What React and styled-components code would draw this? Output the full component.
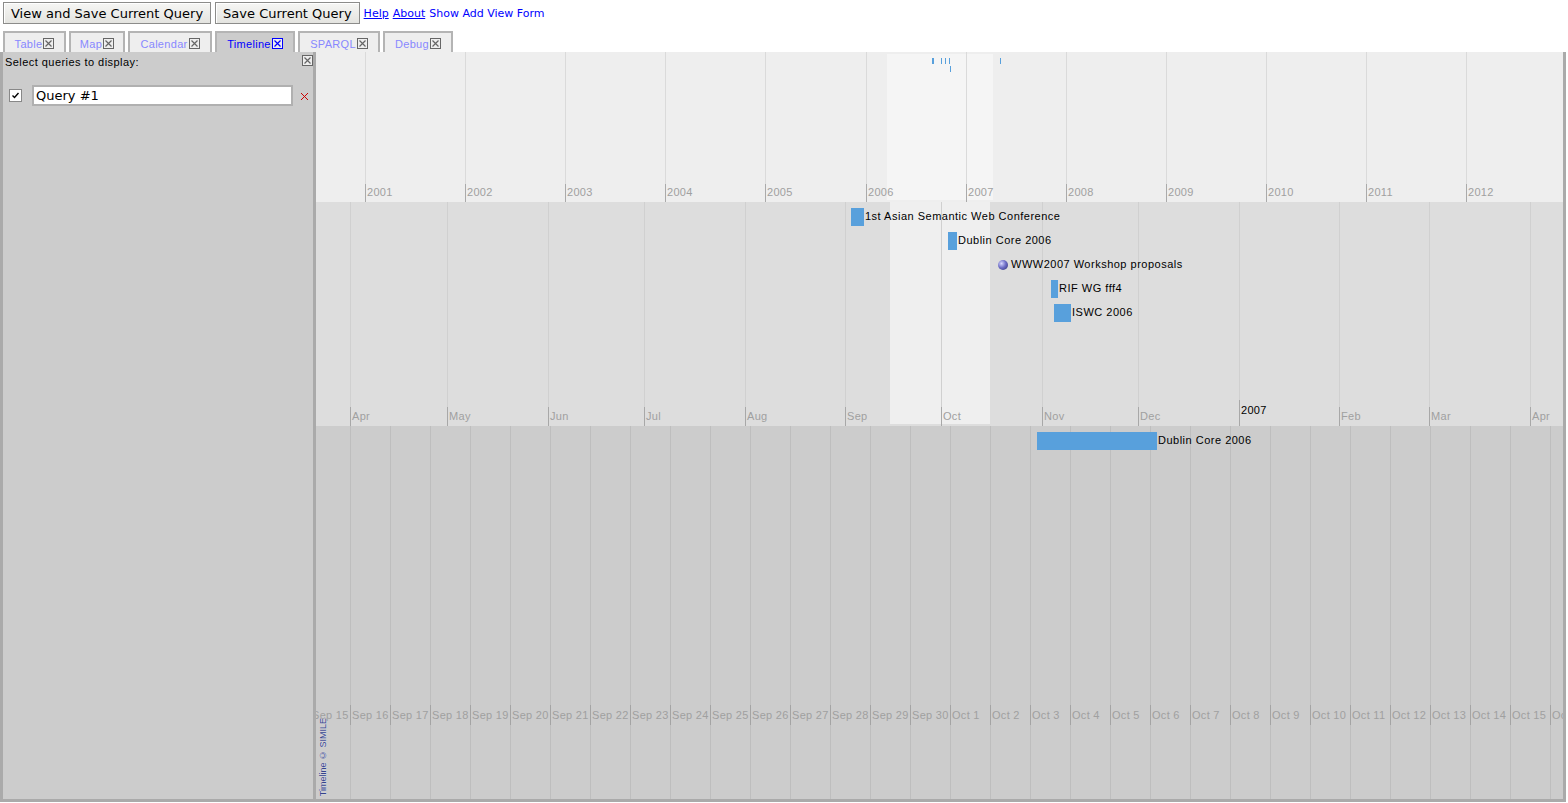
import styled, { createGlobalStyle } from 'styled-components';

const GlobalStyle = createGlobalStyle`
  html, body {
    margin: 0;
    padding: 0;
    background: #fff;
  }
  body {
    font-family: "Liberation Sans", Arial, sans-serif;
    font-size: 11px;
  }
`;

const TopBar = styled.div`
  display: flex;
  align-items: center;
  gap: 4px;
  height: 22px;
  padding: 2px 3px 0;
`;

const Button = styled.button`
  height: 22px;
  padding: 0 7px;
  font-family: "DejaVu Sans", sans-serif;
  font-size: 13px;
  color: #000;
  background: linear-gradient(#f6f6f4, #e4e4e0);
  border: 1px solid #8c8c8a;
  box-shadow: inset 1px 1px #fff;
  border-radius: 0;
`;

const Links = styled.div`
  display: flex;
  gap: 4px;
  font-family: "DejaVu Sans", sans-serif;
  font-size: 11px;
  color: #00f;
`;

const Link = styled.a`
  color: #00f;
  text-decoration: ${(p) => (p.$plain ? 'none' : 'underline')};
  cursor: pointer;
`;

const TabRow = styled.div`
  display: flex;
  gap: 3px;
  padding-left: 3px;
  margin-top: 7px;
  height: 21px;
`;

const Tab = styled.div`
  display: flex;
  align-items: center;
  justify-content: center;
  gap: 1px;
  width: ${(p) => p.$w}px;
  box-sizing: border-box;
  border: 2px solid #b4b4b4;
  border-bottom: none;
  background: ${(p) => (p.$active ? '#ccc' : '#eee')};
  color: ${(p) => (p.$active ? '#00f' : '#88f')};
  font-size: 11px;
  letter-spacing: 0.3px;
  padding-top: 2px;
`;

const BoxX = ({ color = '#666' }) => (
  <svg width="11" height="11" viewBox="0 0 11 11">
    <rect x="0.5" y="0.5" width="10" height="10" fill="#eee" stroke={color} />
    <path d="M2.5 2.5 L8.5 8.5 M8.5 2.5 L2.5 8.5" stroke={color} strokeWidth="1.2" />
  </svg>
);

const Main = styled.div`
  display: flex;
  width: 1566px;
  height: 750px;
  box-sizing: border-box;
  border: 3px solid #aaa;
  border-top: none;
`;

const LeftPanel = styled.div`
  width: 310px;
  flex-shrink: 0;
  background: #ccc;
  border-right: 3px solid #aaa;
  display: flex;
  flex-direction: column;
`;

const PanelHeader = styled.div`
  display: flex;
  justify-content: space-between;
  align-items: flex-start;
  padding: 2px 0 0 2px;
  letter-spacing: 0.45px;
  color: #000;
  line-height: 13px;
`;

const QueryRow = styled.div`
  display: flex;
  align-items: center;
  margin-top: 16px;
  padding-left: 6px;
`;

const CheckBox = styled.span`
  width: 13px;
  height: 13px;
  box-sizing: border-box;
  border: 1px solid #888;
  background: #fff;
  display: flex;
  align-items: center;
  justify-content: center;
`;

const QueryInput = styled.input`
  width: 261px;
  height: 21px;
  box-sizing: border-box;
  margin-left: 10px;
  border: 2px solid #b0b0b0;
  background: #fff;
  font-family: "DejaVu Sans", sans-serif;
  font-size: 13px;
  padding: 0 2px;
  color: #000;
  outline: none;
`;

const RemoveX = styled.span`
  margin-left: 7px;
  margin-top: 2px;
  display: flex;
`;

const Timeline = styled.div`
  flex: 1;
  display: flex;
  flex-direction: column;
  overflow: hidden;
  min-width: 0;
`;

const Band = styled.div`
  position: relative;
  height: ${(p) => p.$h}px;
  flex-shrink: 0;
  background: ${(p) => p.$bg};
  overflow: hidden;
`;

const Highlight = styled.div`
  position: absolute;
  top: ${(p) => p.$top}px;
  bottom: ${(p) => p.$bottom}px;
  background: ${(p) => p.$bg};
`;

const GridLine = styled.div`
  position: absolute;
  top: 0;
  bottom: 0;
  width: 1px;
  background: ${(p) => p.$color};
`;

const Tick = styled.div`
  position: absolute;
  width: 1px;
  height: ${(p) => p.$h}px;
  background: ${(p) => p.$color};
`;

const ScaleLabel = styled.div`
  position: absolute;
  font-size: 11px;
  letter-spacing: 0.3px;
  line-height: 13px;
  white-space: nowrap;
  color: ${(p) => p.$color || '#a0a0a0'};
`;

const EventMark = styled.div`
  position: absolute;
  background: #58a0dc;
`;

const EventLabel = styled.div`
  position: absolute;
  font-size: 11px;
  letter-spacing: 0.5px;
  line-height: 13px;
  white-space: nowrap;
  color: #000;
`;

const Dot = styled.div`
  position: absolute;
  width: 10px;
  height: 10px;
  border-radius: 50%;
  background: radial-gradient(circle at 35% 35%, #d8d8ff 0%, #7070c8 45%, #2a2a70 100%);
`;

const Credit = styled.div`
  position: absolute;
  left: 2px;
  bottom: 3px;
  writing-mode: vertical-rl;
  transform: rotate(180deg);
  font-size: 9px;
  line-height: 10px;
  color: #34448c;
  text-shadow: 0 0 1px #eef;
`;

const years = Array.from({ length: 12 }, (_, i) => ({ x: Math.round(49 + 100.1 * i), label: String(2001 + i) }));

const months = [
  [34, 'Apr'], [131, 'May'], [232, 'Jun'], [328, 'Jul'], [429, 'Aug'], [529, 'Sep'],
  [625, 'Oct'], [726, 'Nov'], [822, 'Dec'], [923, '2007'], [1023, 'Feb'], [1113, 'Mar'], [1214, 'Apr'],
];

const days = Array.from({ length: 33 }, (_, k) => ({
  x: -6 + 40 * k,
  label: k < 16 ? `Sep ${15 + k}` : `Oct ${k - 15}`,
}));

const overviewTicks = [
  { x: 616, y: 6, w: 2 }, { x: 625, y: 6, w: 1 }, { x: 629, y: 6, w: 1 },
  { x: 633, y: 6, w: 1 }, { x: 634, y: 14, w: 1 }, { x: 684, y: 6, w: 1 },
];

const detailEvents = [
  { x: 535, y: 6, w: 13, label: '1st Asian Semantic Web Conference' },
  { x: 632, y: 30, w: 9, label: 'Dublin Core 2006' },
  { x: 682, y: 58, dot: true, label: 'WWW2007 Workshop proposals' },
  { x: 735, y: 78, w: 7, label: 'RIF WG fff4' },
  { x: 738, y: 102, w: 17, label: 'ISWC 2006' },
];

const tabs = [
  ['Table', 63], ['Map', 56], ['Calendar', 84], ['Timeline', 80], ['SPARQL', 82], ['Debug', 70],
];

export default function App() {
  return (
    <>
      <GlobalStyle />
      <TopBar>
        <Button>View and Save Current Query</Button>
        <Button>Save Current Query</Button>
        <Links>
          <Link>Help</Link>
          <Link>About</Link>
          <Link $plain>Show Add View Form</Link>
        </Links>
      </TopBar>
      <TabRow>
        {tabs.map(([name, w]) => (
          <Tab key={name} $w={w} $active={name === 'Timeline'}>
            {name}
            <BoxX color={name === 'Timeline' ? '#00f' : '#666'} />
          </Tab>
        ))}
      </TabRow>
      <Main>
        <LeftPanel>
          <PanelHeader>
            <span style={{ marginTop: 2 }}>Select queries to display:</span>
            <span style={{ marginTop: 1 }}>
              <BoxX color="#666" />
            </span>
          </PanelHeader>
          <QueryRow>
            <CheckBox>
              <svg width="9" height="9" viewBox="0 0 9 9">
                <path d="M1.5 4.5 L3.5 6.5 L7.5 2" fill="none" stroke="#000" strokeWidth="1.4" />
              </svg>
            </CheckBox>
            <QueryInput defaultValue="Query #1" />
            <RemoveX>
              <svg width="9" height="9" viewBox="0 0 9 9">
                <path d="M1 1 L8 8 M8 1 L1 8" stroke="#c00" strokeWidth="1" />
              </svg>
            </RemoveX>
          </QueryRow>
        </LeftPanel>
        <Timeline>
          <Band $h={150} $bg="#eeeeee">
            <Highlight $top={2} $bottom={2} $bg="#f5f5f5" style={{ left: 571, width: 106 }} />
            {years.map((y) => (
              <div key={y.label}>
                <GridLine $color="#dadada" style={{ left: y.x }} />
                <Tick $h={18} $color="#aaa" style={{ left: y.x, bottom: 0 }} />
                <ScaleLabel style={{ left: y.x + 2, bottom: 3 }}>{y.label}</ScaleLabel>
              </div>
            ))}
            {overviewTicks.map((t, i) => (
              <EventMark key={i} style={{ left: t.x, top: t.y, width: t.w, height: 6 }} />
            ))}
          </Band>
          <Band $h={224} $bg="#dddddd">
            <Highlight $top={0} $bottom={2} $bg="#efefef" style={{ left: 574, width: 100 }} />
            {months.map(([x, label]) => {
              const isYear = label === '2007';
              return (
                <div key={x}>
                  <GridLine $color="#d0d0d0" style={{ left: x }} />
                  <Tick $h={isYear ? 26 : 19} $color="#a8a8a8" style={{ left: x, bottom: 0 }} />
                  <ScaleLabel
                    $color={isYear ? '#000' : '#a0a0a0'}
                    style={{ left: x + 2, bottom: isYear ? 9 : 3 }}
                  >
                    {label}
                  </ScaleLabel>
                </div>
              );
            })}
            {detailEvents.map((e) => (
              <div key={e.label}>
                {e.dot ? (
                  <Dot style={{ left: e.x, top: e.y }} />
                ) : (
                  <EventMark style={{ left: e.x, top: e.y, width: e.w, height: 18 }} />
                )}
                <EventLabel style={{ left: e.dot ? e.x + 13 : e.x + e.w + 1, top: e.dot ? e.y - 2 : e.y + 2 }}>
                  {e.label}
                </EventLabel>
              </div>
            ))}
          </Band>
          <Band $h={373} $bg="#cccccc">
            {days.map((d) => (
              <div key={d.label}>
                <GridLine $color="#bebebe" style={{ left: d.x }} />
                <Tick $h={20} $color="#a4a4a4" style={{ left: d.x, top: 279 }} />
                <ScaleLabel style={{ left: d.x + 2, top: 283 }}>{d.label}</ScaleLabel>
              </div>
            ))}
            <EventMark style={{ left: 721, top: 6, width: 120, height: 18 }} />
            <EventLabel style={{ left: 842, top: 8 }}>Dublin Core 2006</EventLabel>
            <Credit>Timeline © SIMILE</Credit>
          </Band>
        </Timeline>
      </Main>
    </>
  );
}
